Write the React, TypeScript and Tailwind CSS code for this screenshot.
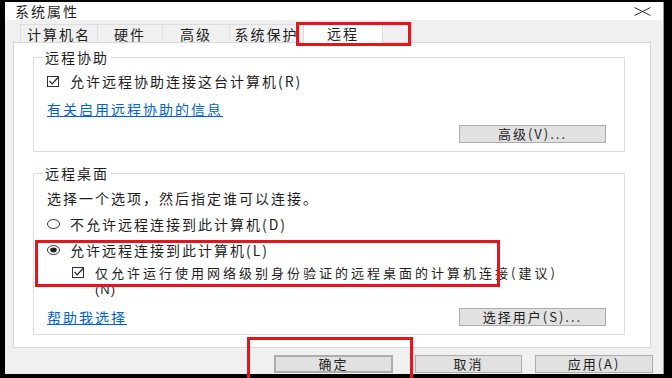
import React from "react";

function CheckBox() {
  return (
    <svg width="12" height="11" viewBox="0 0 12 11" className="shrink-0">
      <rect x="0.5" y="0.5" width="11" height="10" fill="white" stroke="#333" />
      <path d="M2.5 5 L5.2 7.8 L11 1.5" fill="none" stroke="#222" strokeWidth="1.2" />
    </svg>
  );
}

function Radio({ checked }: { checked?: boolean }) {
  return (
    <svg width="13" height="10" viewBox="0 0 13 10" className="shrink-0">
      <ellipse cx="6.5" cy="5" rx="6" ry="4.5" fill="white" stroke="#333" />
      {checked && <ellipse cx="6.5" cy="5" rx="3.3" ry="2.4" fill="#222" />}
    </svg>
  );
}

function Btn({ children, className = "" }: { children: React.ReactNode; className?: string }) {
  return (
    <div
      className={
        "h-[18px] bg-[#e1e1e1] border border-[#adadad] flex items-center justify-center text-[13px] tracking-[2px] leading-[16px] " +
        className
      }
    >
      {children}
    </div>
  );
}

export default function App() {
  return (
    <div className="relative w-[672px] h-[378px] bg-black pt-[2px] pl-[5px] pr-[8px] pb-[4px] overflow-hidden font-['Noto_Sans_CJK_SC','Noto_Sans',sans-serif] text-[14px] tracking-[2px] text-[#1e1e1e]">
      <div className="h-full flex flex-col bg-[#f0f0f0] border-r border-[#9a9a9a]">
        {/* title bar */}
        <div className="h-[18px] bg-white flex items-center justify-between pl-[10px] pr-[12px] shrink-0">
          <span className="leading-[16px]">系统属性</span>
          <svg width="17" height="9" viewBox="0 0 17 9">
            <path d="M0.5 0.5 L16.5 8.5 M0.5 8.5 L16.5 0.5" stroke="#333" strokeWidth="1" fill="none" />
          </svg>
        </div>

        {/* tabs */}
        <div className="h-[22px] flex items-end pl-[15px] shrink-0">
          <div className="w-[77px] h-[18px] border-t border-l border-[#dedede] flex items-center justify-center leading-[16px]">计算机名</div>
          <div className="w-[65px] h-[18px] border-t border-l border-[#dedede] flex items-center justify-center leading-[16px]">硬件</div>
          <div className="w-[67px] h-[18px] border-t border-l border-[#dedede] flex items-center justify-center leading-[16px]">高级</div>
          <div className="w-[74px] h-[18px] border-t border-l border-[#dedede] flex items-center justify-center leading-[16px]">系统保护</div>
          <div className="relative z-10 w-[80px] h-[21px] -mb-[1px] bg-white border-t border-l border-r border-[#d9d9d9] flex items-center justify-center leading-[16px]">远程</div>
        </div>

        {/* panel */}
        <div className="h-[306px] ml-[8px] mr-[12px] bg-white border border-[#d9d9d9] pl-[19px] pr-[25px] pt-[6px] shrink-0">
          <fieldset className="border border-[#dddddd] pl-[13px] pr-[18px] pb-[8px]">
            <legend className="-ml-[4px] px-[2px] leading-[16px]">远程协助</legend>
            <div className="mt-[8px] h-[16px] flex items-center">
              <CheckBox />
              <span className="ml-[11px] leading-[16px]">允许远程协助连接这台计算机(R)</span>
            </div>
            <div className="mt-[12px] h-[16px] leading-[16px] text-[#0066cc] underline">有关启用远程协助的信息</div>
            <div className="mt-[8px] flex justify-end">
              <Btn className="w-[147px]">高级(V)...</Btn>
            </div>
          </fieldset>

          <fieldset className="mt-[13px] border border-[#dddddd] pl-[13px] pr-[18px] pb-[8px]">
            <legend className="-ml-[4px] px-[2px] leading-[16px]">远程桌面</legend>
            <div className="mt-[9px] h-[16px] leading-[16px]">选择一个选项，然后指定谁可以连接。</div>
            <div className="mt-[10px] h-[16px] flex items-center">
              <Radio />
              <span className="ml-[10px] leading-[16px]">不允许远程连接到此计算机(D)</span>
            </div>
            <div className="mt-[10px] h-[16px] flex items-center">
              <Radio checked />
              <span className="ml-[10px] leading-[16px]">允许远程连接到此计算机(L)</span>
            </div>
            <div className="mt-[5px] h-[34px] pl-[25px] flex items-start">
              <div className="mt-[4px]">
                <CheckBox />
              </div>
              <div className="ml-[11px] flex flex-col">
                <span className="text-[13px] tracking-[3px] leading-[19px]">
                  仅允许运行使用网络级别身份验证的远程桌面的计算机连接(建议)
                </span>
                <span className="font-['Liberation_Sans',sans-serif] text-[13px] tracking-[1px] leading-[15px]">(N)</span>
              </div>
            </div>
            <div className="mt-[11px] h-[18px] flex items-center justify-between">
              <span className="leading-[16px] text-[#0066cc] underline">帮助我选择</span>
              <Btn className="w-[147px]">选择用户(S)...</Btn>
            </div>
          </fieldset>
        </div>

        {/* bottom buttons */}
        <div className="flex-1 flex items-start pt-[7px] pl-[269px]">
          <Btn className="w-[119px] border-[#0078d7] border-[2px]">确定</Btn>
          <Btn className="w-[107px] ml-[22px]">取消</Btn>
          <Btn className="w-[118px] ml-[13px]">应用(A)</Btn>
        </div>
      </div>

      {/* red highlight boxes */}
      <div className="absolute left-[296px] top-[22px] w-[115px] h-[24px] border-[3px] border-[#e8131b] z-20" />
      <div className="absolute left-[35px] top-[240px] w-[465px] h-[47px] border-[3px] border-[#e8131b] z-20" />
      <div className="absolute left-[247px] top-[337px] w-[166px] h-[50px] border-[3px] border-[#e8131b] z-20" />
    </div>
  );
}
